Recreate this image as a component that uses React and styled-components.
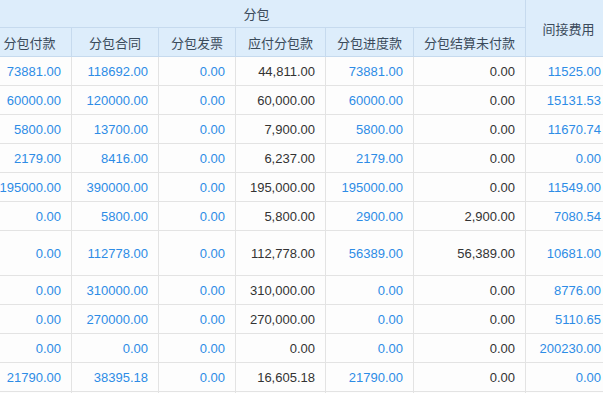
import React from "react";
import styled, { createGlobalStyle } from "styled-components";

const Global = createGlobalStyle`
  html, body { margin: 0; padding: 0; background: #fff; }
  body { font-family: "Liberation Sans", "Noto Sans CJK SC", Arial, sans-serif; }
`;

const Viewport = styled.div`
  width: 603px;
  height: 393px;
  overflow: hidden;
  background: #fff;
`;

const Table = styled.table`
  margin-left: -12px;
  border-collapse: separate;
  border-spacing: 0;
  table-layout: fixed;
  width: 700px;
  font-size: 13px;
`;

const HeadCell = styled.th`
  background: #ddedfb;
  color: #3a4a5a;
  font-weight: normal;
  text-align: center;
  border-right: 1px solid #c6daee;
  border-bottom: 1px solid #c6daee;
  padding: 0 4px;
  height: ${(p) => p.$h}px;
  box-sizing: border-box;
  white-space: nowrap;
`;

const Row = styled.tr`
  height: ${(p) => (p.$tall ? 45 : 29)}px;
`;

const Cell = styled.td`
  text-align: right;
  padding: 0 10px 0 4px;
  border-right: 1px solid #e3e3e3;
  border-bottom: 1px solid #e3e3e3;
  color: ${(p) => (p.$plain ? "#333333" : "#2d8ce6")};
  background: #fdfdfd;
  white-space: nowrap;
  overflow: hidden;
  box-sizing: border-box;
`;

const widths = [84, 87, 77, 90, 88, 112, 86, 76];

const rows = [
  ["73881.00", "118692.00", "0.00", "44,811.00", "73881.00", "0.00", "11525.00"],
  ["60000.00", "120000.00", "0.00", "60,000.00", "60000.00", "0.00", "15131.53"],
  ["5800.00", "13700.00", "0.00", "7,900.00", "5800.00", "0.00", "11670.74"],
  ["2179.00", "8416.00", "0.00", "6,237.00", "2179.00", "0.00", "0.00"],
  ["195000.00", "390000.00", "0.00", "195,000.00", "195000.00", "0.00", "11549.00"],
  ["0.00", "5800.00", "0.00", "5,800.00", "2900.00", "2,900.00", "7080.54"],
  ["0.00", "112778.00", "0.00", "112,778.00", "56389.00", "56,389.00", "10681.00", true],
  ["0.00", "310000.00", "0.00", "310,000.00", "0.00", "0.00", "8776.00"],
  ["0.00", "270000.00", "0.00", "270,000.00", "0.00", "0.00", "5110.65"],
  ["0.00", "0.00", "0.00", "0.00", "0.00", "0.00", "200230.00"],
  ["21790.00", "38395.18", "0.00", "16,605.18", "21790.00", "0.00", "0.00"],
  ["0.00", "0.00", "0.00", "0.00", "0.00", "0.00", "0.00"],
];

const plainCols = [3, 5];

export default function App() {
  return (
    <>
      <Global />
      <Viewport>
        <Table>
          <colgroup>
            {widths.map((w, i) => (
              <col key={i} style={{ width: w }} />
            ))}
          </colgroup>
          <thead>
            <tr>
              <HeadCell colSpan={6} $h={28}>分包</HeadCell>
              <HeadCell rowSpan={2} $h={57}>间接费用</HeadCell>
              <HeadCell rowSpan={2} $h={57}>合计</HeadCell>
            </tr>
            <tr>
              <HeadCell $h={29}>分包付款</HeadCell>
              <HeadCell $h={29}>分包合同</HeadCell>
              <HeadCell $h={29}>分包发票</HeadCell>
              <HeadCell $h={29}>应付分包款</HeadCell>
              <HeadCell $h={29}>分包进度款</HeadCell>
              <HeadCell $h={29}>分包结算未付款</HeadCell>
            </tr>
          </thead>
          <tbody>
            {rows.map((r, ri) => (
              <Row key={ri} $tall={r[7] === true}>
                {r.slice(0, 7).map((v, ci) => (
                  <Cell key={ci} $plain={plainCols.includes(ci)}>
                    {v}
                  </Cell>
                ))}
                <Cell $plain>0.00</Cell>
              </Row>
            ))}
          </tbody>
        </Table>
      </Viewport>
    </>
  );
}
